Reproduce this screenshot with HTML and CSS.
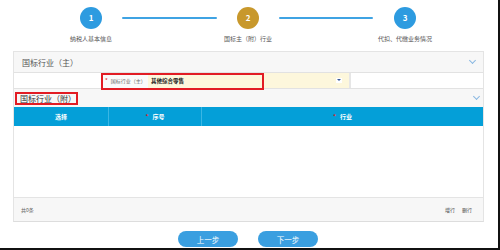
FILE: index.html
```html
<!doctype html>
<html lang="zh-CN">
<head>
	<meta charset="UTF-8">
	<title>国标主（附）行业</title>
	<link rel="stylesheet" href="styles.css">
</head>
<body>
	<div class="page">
		<div class="steps">
			<div class="step-row">
				<span class="dot dot-blue">1</span>
				<span class="bar"></span>
				<span class="dot dot-gold">2</span>
				<span class="bar bar2"></span>
				<span class="dot dot-blue">3</span>
			</div>
			<div class="step-labels">
				<span>纳税人基本信息</span>
				<span>国标主（附）行业</span>
				<span>代扣、代缴业务情况</span>
			</div>
		</div>

		<div class="panel">
			<div class="panel-head">
				<span class="title">国标行业（主）</span>
				<span class="chev"></span>
			</div>
			<div class="form-row">
				<div class="cell-blank"></div>
				<div class="field">
					<div class="field-label"><i class="req">*</i>国标行业（主）</div>
					<div class="field-input">
						<span class="val">其他综合零售</span>
						<span class="drop"></span>
					</div>
					<div class="mark"></div>
				</div>
				<div class="cell-rest"></div>
			</div>
			<div class="panel-head head2">
				<span class="title title2">国标行业（附）</span>
				<span class="chev"></span>
			</div>
			<div class="grid-head">
				<div class="col c1">选择</div>
				<div class="col c2"><i class="req">*</i>序号</div>
				<div class="col c3"><i class="req">*</i>行业</div>
			</div>
			<div class="grid-body"></div>
			<div class="grid-foot">
				<span>共0条</span>
				<span class="ops"><span>增行</span><span>删行</span></span>
			</div>
		</div>

		<div class="btns">
			<span class="btn">上一步</span>
			<span class="btn">下一步</span>
		</div>
	</div>
</body>
</html>
```

FILE: styles.css
```css
body,html{margin: 0;padding: 0;background: #fff;}
body{font-family: "Noto Sans CJK SC","Noto Sans",sans-serif;color: #333;}
.page{width: 498px;height: 248px;border-right: 2px solid #111;border-bottom: 2px solid #111;overflow: hidden;}

.steps{height: 51px;}
.step-row{display: flex;align-items: center;padding: 7px 0 0 80px;height: 22px;}
.dot{width: 22px;height: 22px;border-radius: 50%;color: #fff;font-size: 8px;font-weight: bold;display: flex;align-items: center;justify-content: center;line-height: 1;}
.dot-blue{background: #2d9be0;}
.dot-gold{background: #c8982c;}
.bar{width: 95px;height: 2px;background: #3fa3e3;margin: 0 20px;border-radius: 1px;}
.bar2{width: 94px;margin: 0 21px 0 20px;}
.step-labels{display: flex;gap: 37px;padding-left: 31px;margin-top: 6px;}
.step-labels span{width: 120px;text-align: center;font-size: 6px;color: #555;line-height: 8px;}

.panel{margin-left: 13px;width: 469px;border: 1px solid #e4e4e4;border-bottom-color: #ddd;}
.panel-head{height: 20px;background: #f7f7f7;display: flex;align-items: center;justify-content: space-between;padding: 0 8px 0 8px;}
.title{font-size: 8px;color: #555;}
.head2{height: 18px;padding-left: 1px;padding-right: 4px;}
.title2{color: #333;border: 2px solid #e21c24;padding: 0 0 0 3px;line-height: 9px;white-space: nowrap;}
.chev{width: 4px;height: 4px;border-right: 1px solid #8ab8e2;border-bottom: 1px solid #8ab8e2;transform: rotate(45deg);margin-top: -3px;}

.form-row{display: flex;height: 15px;border-top: 1px solid #e2e2e2;border-bottom: 1px solid #e2e2e2;background: #fff;}
.cell-blank{width: 87px;}
.field{position: relative;display: flex;width: 248px;}
.field-label{width: 47px;background: #fafafa;font-size: 5px;color: #666;display: flex;align-items: center;padding-left: 4px;box-sizing: border-box;}
.req{color: #e21c24;font-style: normal;font-size: 6px;margin-right: 3px;}
.field-input{flex: 1;background: #fdf7dc;display: flex;align-items: center;justify-content: space-between;padding: 0 7px 0 3px;}
.val{font-size: 5.5px;font-weight: bold;color: #222;}
.drop{width: 6px;height: 5px;background: #fff;position: relative;}
.drop:after{content: "";position: absolute;left: 1px;top: 1px;border-left: 2px solid transparent;border-right: 2px solid transparent;border-top: 2px solid #3a5a9a;}
.mark{position: absolute;left: 0;top: 0;width: 159px;height: 13px;border: 2px solid #e21c24;}
.cell-rest{flex: 1;border-left: 2px solid #e6e6e6;}

.grid-head{display: flex;height: 19px;background: #049fd8;color: #fff;font-size: 6px;font-weight: bold;}
.col{display: flex;align-items: center;justify-content: center;}
.c1{width: 94px;border-right: 1px solid #3ab6e4;}
.c2{width: 92px;border-right: 1px solid #3ab6e4;}
.c3{flex: 1;}
.col .req{margin-right: 4px;}
.grid-body{height: 71px;background: #fff;border-bottom: 1px solid #e4e4e4;}
.grid-foot{height: 23px;background: #f7f7f7;display: flex;align-items: center;justify-content: space-between;padding: 0 11px 0 7px;font-size: 5px;color: #666;}
.ops{display: flex;gap: 7px;color: #444;}

.btns{display: flex;gap: 20px;padding: 9px 0 0 178px;}
.btn{width: 60px;height: 16px;border-radius: 8px;background: #3a9fe0;color: #fff;font-size: 7.5px;display: flex;align-items: center;justify-content: center;}
```
